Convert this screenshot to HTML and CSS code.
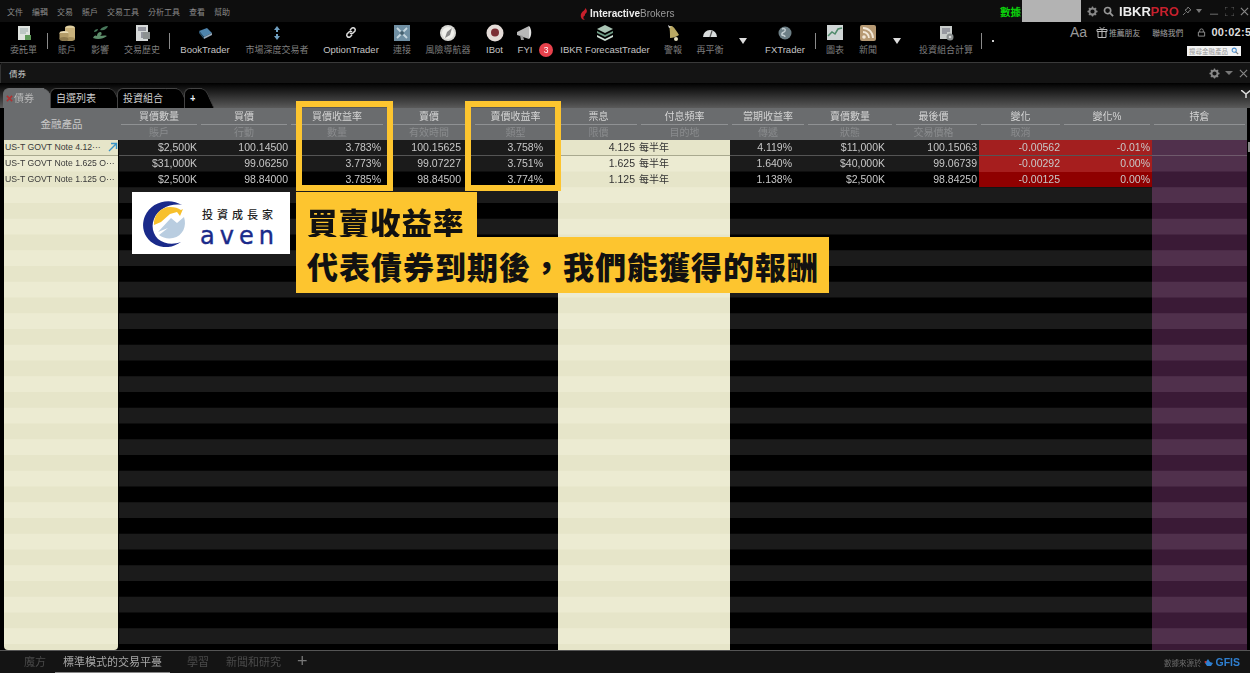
FILE: index.html
```html
<!DOCTYPE html>
<html lang="zh-Hant">
<head>
<meta charset="utf-8">
<title>IBKR 債券</title>
<link rel="stylesheet" href="styles.css">
</head>
<body>
<div class="stage">
<div class="app">
  <header class="titlebar">
    <nav class="menu"><span>文件</span><span>編輯</span><span>交易</span><span>賬戶</span><span>交易工具</span><span>分析工具</span><span>查看</span><span>幫助</span></nav>
    <div class="brand">
      <svg class="flame" viewBox="0 0 8 12"><path d="M5 0C6 2 2 3 1 6c-1 3 1 6 4 6-2-1-2-3-1-4 1 0 1-1 1-2C7 5 8 2 5 0z" fill="#c8202c"/></svg>
      <span class="brand-a">Interactive</span><span class="brand-b">Brokers</span>
    </div>
    <div class="title-right">
      <span class="data-label">數據</span>
      <span class="redact"></span>
      <svg class="ic-gear" viewBox="0 0 12 12"><circle cx="6" cy="6" r="3.4" fill="none" stroke="#888" stroke-width="2.2"/><path d="M6 .5v2M6 9.5v2M.5 6h2M9.5 6h2M2 2l1.4 1.4M8.6 8.6 10 10M10 2 8.6 3.4M3.4 8.6 2 10" stroke="#888" stroke-width="1.4"/></svg>
      <svg class="ic-search" viewBox="0 0 12 12"><circle cx="5" cy="5" r="3.4" fill="none" stroke="#999" stroke-width="1.8"/><path d="M7.5 7.5 11 11" stroke="#999" stroke-width="2"/></svg>
      <span class="ibkr">IBKR<b>PRO</b></span>
      <svg class="ic-pin" viewBox="0 0 10 10"><path d="M6 1l3 3-2 1-1 2-3-3 2-1zM3.5 6.5 1 9" fill="none" stroke="#777" stroke-width="1"/></svg>
      <i class="tri-small"></i>
      <svg class="ic-win" viewBox="0 0 10 10"><path d="M0 8h9" stroke="#666" stroke-width="1.2"/></svg>
      <svg class="ic-win" viewBox="0 0 10 10"><path d="M0 3V0h3M7 0h3v3M10 7v3H7M3 10H0V7" fill="none" stroke="#666" stroke-width="1"/></svg>
      <svg class="ic-win" viewBox="0 0 10 10"><path d="M1 1l8 8M9 1 1 9" stroke="#888" stroke-width="1.3"/></svg>
    </div>
  </header>

  <div class="toolbar">
    <div class="tools">
      <div class="tool"><svg viewBox="0 0 20 20"><rect x="4" y="3" width="12" height="14" fill="#dfe3df"/><path d="M6 6h8M6 8h8M6 10h6" stroke="#9aa" stroke-width="1"/><rect x="11" y="12" width="6" height="5" fill="#5f9a5a"/></svg><span class="cjk">委託單</span></div>
      <i class="sep"></i>
      <div class="tool"><svg viewBox="0 0 20 20"><ellipse cx="13" cy="5" rx="5" ry="2.5" fill="#e0cfa0"/><rect x="8" y="5" width="10" height="11" fill="#c9b27c"/><ellipse cx="13" cy="16" rx="5" ry="2" fill="#a8925f"/><ellipse cx="7" cy="10" rx="4.5" ry="2" fill="#eadcb4"/><rect x="2.5" y="10" width="9" height="6" fill="#b39c68"/><ellipse cx="7" cy="16" rx="4.5" ry="2" fill="#8f7b4e"/></svg><span class="cjk">賬戶</span></div>
      <div class="tool"><svg viewBox="0 0 20 20"><path d="M3 15c5 2 10 1 14-2-3-1-5 0-7 0 2-1 2-3 1-4-3 0-4 2-4 4-1-1-3-1-4 2z" fill="#5d8c6a"/><path d="M10 7c2-3 5-4 8-4-1 3-4 5-8 4zM4 9c0-2 2-3 4-3 0 2-2 3-4 3z" fill="#47775a"/></svg><span class="cjk">影響</span></div>
      <div class="tool"><svg viewBox="0 0 20 20"><rect x="4" y="2" width="12" height="16" fill="#d5d8d8"/><path d="M6 5h8M6 7h8M9 10h7M9 12h7M9 14h7" stroke="#556" stroke-width="1.1"/><rect x="11" y="9" width="7" height="7" fill="#8c9090"/></svg><span class="cjk">交易歷史</span></div>
      <i class="sep"></i>
      <div class="tool"><svg viewBox="0 0 20 20"><path d="M4 8l8-3 5 5-8 4z" fill="#4e84ad"/><path d="M4 8l5 6v2L4 10z" fill="#2d5675"/><path d="M9 14l8-4v2l-8 4z" fill="#9ab"/></svg><span>BookTrader</span></div>
      <div class="tool"><svg viewBox="0 0 20 20"><path d="M10 3l3 4h-2v2H9V7H7zM10 17l3-4h-2v-2H9v2H7z" fill="#6f9fc0"/></svg><span class="cjk">市場深度交易者</span></div>
      <div class="tool"><svg viewBox="0 0 20 20"><path d="M9 7l2-2c2-1 4 1 3 3l-2 2c-1 1-2 1-3 0M11 12l-2 2c-2 1-4-1-3-3l2-2c1-1 2-1 3 0" fill="none" stroke="#ddd" stroke-width="1.5"/></svg><span>OptionTrader</span></div>
      <div class="tool"><svg viewBox="0 0 20 20"><rect x="2" y="2" width="16" height="16" fill="#6f8fa3"/><path d="M5 5l10 10M15 5 5 15" stroke="#c5d6df" stroke-width="1.8"/><circle cx="10" cy="10" r="2" fill="#44606f"/></svg><span class="cjk">連接</span></div>
      <div class="tool"><svg viewBox="0 0 20 20"><circle cx="10" cy="10" r="8" fill="#d8d8d4"/><circle cx="10" cy="10" r="6" fill="#f0f0ec"/><path d="M14 5l-2 7-5 3 2-6z" fill="#888"/></svg><span class="cjk">風險導航器</span></div>
      <div class="tool"><svg viewBox="0 0 20 20"><circle cx="10" cy="10" r="8.5" fill="#e5dcd8"/><circle cx="10" cy="9.5" r="4" fill="#7c2f35"/></svg><span>IBot</span></div>
      <div class="tool"><svg viewBox="0 0 20 20"><path d="M2 9l12-6v13L2 12z" fill="#b8b8b8"/><path d="M14 3c3 3 3 10 0 13z" fill="#e2e2e2"/><path d="M5 12l1 5h3l-1-4z" fill="#999"/></svg><span>FYI</span></div>
      <div class="badge-slot"><span class="badge">3</span></div>
      <div class="tool"><svg viewBox="0 0 20 20"><path d="M10 2l8 4-8 4-8-4z" fill="#a9c4b4"/><path d="M2 8l8 4 8-4v2l-8 4-8-4z" fill="#6f9c86"/><path d="M2 12l8 4 8-4v2l-8 4-8-4z" fill="#cfe0d6"/></svg><span>IBKR ForecastTrader</span></div>
      <div class="tool"><svg viewBox="0 0 20 20"><path d="M6 3l3 0c3 2 5 6 7 9-3 2-6 3-9 3C7 11 7 6 6 3z" fill="#b9a862"/><path d="M5 2l3 2-2 1z" fill="#ddd"/><circle cx="13" cy="16" r="2" fill="#e4dfbf"/></svg><span class="cjk">警報</span></div>
      <div class="tool"><svg viewBox="0 0 20 20"><path d="M3 14a7 7 0 0 1 14 0z" fill="#d9dcdc"/><path d="M10 14l2-6" stroke="#555" stroke-width="1.2"/></svg><span class="cjk">再平衡</span></div>
      <div class="caret-cell"><i class="tri"></i></div>
      <div class="tool"><svg viewBox="0 0 20 20"><circle cx="10" cy="10" r="6.5" fill="#6d7f86"/><path d="M7 6c2-1 4 0 3 2S6 9 7 12c2 1 3 0 3 2" stroke="#c5d0d4" stroke-width="1.4" fill="none"/></svg><span>FXTrader</span></div>
      <i class="sep"></i>
      <div class="tool"><svg viewBox="0 0 20 20"><rect x="2" y="2" width="16" height="15" fill="#cfd5d5"/><path d="M3 13l4-4 3 2 3-5 4-1" fill="none" stroke="#4f8a6a" stroke-width="1.5"/></svg><span class="cjk">圖表</span></div>
      <div class="tool"><svg viewBox="0 0 20 20"><rect x="2" y="2" width="16" height="16" rx="2" fill="#b79a74"/><circle cx="6" cy="14" r="1.8" fill="#f2e8d8"/><path d="M5 9a6 6 0 0 1 6 6M5 5a10 10 0 0 1 10 10" fill="none" stroke="#f2e8d8" stroke-width="1.8"/></svg><span class="cjk">新聞</span></div>
      <div class="caret-cell"><i class="tri"></i></div>
      <div class="tool"><svg viewBox="0 0 20 20"><rect x="4" y="3" width="12" height="13" fill="#c8ccca"/><path d="M6 6h8M6 8h8M6 10h5" stroke="#667" stroke-width="1"/><circle cx="14" cy="14" r="3.5" fill="#8a8f8f"/><circle cx="14" cy="14" r="1.3" fill="#ddd"/></svg><span class="cjk">投資組合計算</span></div>
      <i class="sep"></i>
      <div class="dot-cell"><i class="dot"></i></div>
    </div>
    <div class="tool-right">
      <div class="tool-links">
        <span class="aa">Aa</span>
        <svg class="ic-gift" viewBox="0 0 12 12"><path d="M1 3.5h10v2H1zM2 5.5v6h8v-6M6 3.5v8M3.5 1 6 3.5 8.5 1" fill="none" stroke="#bbb" stroke-width="1"/></svg>
        <span class="link first">推薦朋友</span>
        <span class="link second">聯絡我們</span>
        <svg class="ic-lock" viewBox="0 0 10 10"><path d="M3 4.5V3a2 2 0 0 1 4 0v1.5M1.5 4.5h7V9h-7z" fill="none" stroke="#999" stroke-width="1"/></svg>
        <span class="clock">00:02:50</span>
      </div>
      <div class="searchbox"><span>搜尋金融產品</span><svg viewBox="0 0 10 10"><circle cx="4" cy="4" r="2.6" fill="none" stroke="#4a8fd0" stroke-width="1.3"/><path d="M6 6l3 3" stroke="#777" stroke-width="1.5"/></svg></div>
    </div>
  </div>

  <div class="panelbar">
    <span class="panel-title">債券</span>
    <div class="panel-actions">
      <svg class="ic-gear" viewBox="0 0 12 12"><circle cx="6" cy="6" r="3.4" fill="none" stroke="#888" stroke-width="2.2"/><path d="M6 .5v2M6 9.5v2M.5 6h2M9.5 6h2M2 2l1.4 1.4M8.6 8.6 10 10M10 2 8.6 3.4M3.4 8.6 2 10" stroke="#888" stroke-width="1.4"/></svg>
      <i class="tri-small"></i>
      <svg class="ic-win" viewBox="0 0 10 10"><path d="M1 1l8 8M9 1 1 9" stroke="#888" stroke-width="1.3"/></svg>
    </div>
  </div>

  <div class="tabstrip">
    <div class="tab active"><svg class="tab-x" viewBox="0 0 8 8"><path d="M1 1l6 6M7 1 1 7" stroke="#b03030" stroke-width="1.8"/></svg>債券</div>
    <div class="tab">自選列表</div>
    <div class="tab">投資組合</div>
    <div class="tab plus">+</div>
    <svg class="filter" viewBox="0 0 10 8"><path d="M0 0l5 4 5-4M5 4v4" fill="none" stroke="#ddd" stroke-width="1.5"/></svg>
  </div>

  <div class="table">
    <div class="col instrument">
      <div class="hd hd-merged">金融產品</div>
      <div class="cells cream">
        <div class="cell first inst"><span>US-T GOVT Note 4.12···</span><svg class="arrow" viewBox="0 0 10 10"><path d="M1 9l7-7M3 1.5h5.5V7" fill="none" stroke="#3a95c8" stroke-width="1.4"/></svg></div>
        <div class="cell inst"><span>US-T GOVT Note 1.625 O···</span></div>
        <div class="cell inst"><span>US-T GOVT Note 1.125 O···</span></div>
      </div>
    </div>
    <div class="col">
      <div class="hd"><span class="h1">買價數量</span><span class="h2">賬戶</span></div>
      <div class="cells dark pr2"><div class="cell first">$2,500K</div><div class="cell">$31,000K</div><div class="cell">$2,500K</div></div>
    </div>
    <div class="col">
      <div class="hd"><span class="h1">買價</span><span class="h2">行動</span></div>
      <div class="cells dark pr1"><div class="cell first">100.14500</div><div class="cell">99.06250</div><div class="cell">98.84000</div></div>
    </div>
    <div class="col">
      <div class="hd"><span class="h1">買價收益率</span><span class="h2">數量</span></div>
      <div class="cells dark pr4"><div class="cell first">3.783%</div><div class="cell">3.773%</div><div class="cell">3.785%</div></div>
    </div>
    <div class="col">
      <div class="hd"><span class="h1">賣價</span><span class="h2">有效時間</span></div>
      <div class="cells dark pr12"><div class="cell first">100.15625</div><div class="cell">99.07227</div><div class="cell">98.84500</div></div>
    </div>
    <div class="col">
      <div class="hd"><span class="h1">賣價收益率</span><span class="h2">類型</span></div>
      <div class="cells dark pr15"><div class="cell first">3.758%</div><div class="cell">3.751%</div><div class="cell">3.774%</div></div>
    </div>
    <div class="col">
      <div class="hd"><span class="h1">票息</span><span class="h2">限價</span></div>
      <div class="cells cream pr4"><div class="cell first">4.125</div><div class="cell">1.625</div><div class="cell">1.125</div></div>
    </div>
    <div class="col">
      <div class="hd"><span class="h1">付息頻率</span><span class="h2">目的地</span></div>
      <div class="cells cream left"><div class="cell first">每半年</div><div class="cell">每半年</div><div class="cell">每半年</div></div>
    </div>
    <div class="col">
      <div class="hd"><span class="h1">當期收益率</span><span class="h2">傳遞</span></div>
      <div class="cells dark pr14"><div class="cell first">4.119%</div><div class="cell">1.640%</div><div class="cell">1.138%</div></div>
    </div>
    <div class="col">
      <div class="hd"><span class="h1">賣價數量</span><span class="h2">狀態</span></div>
      <div class="cells dark pr9"><div class="cell first">$11,000K</div><div class="cell">$40,000K</div><div class="cell">$2,500K</div></div>
    </div>
    <div class="col">
      <div class="hd"><span class="h1 shift">最後價</span><span class="h2 shift">交易價格</span></div>
      <div class="cells dark pr2"><div class="cell first">100.15063</div><div class="cell">99.06739</div><div class="cell">98.84250</div></div>
    </div>
    <div class="col">
      <div class="hd"><span class="h1">變化</span><span class="h2">取消</span></div>
      <div class="cells dark pr2"><div class="cell first red1">-0.00562</div><div class="cell red2">-0.00292</div><div class="cell red3">-0.00125</div></div>
    </div>
    <div class="col">
      <div class="hd"><span class="h1">變化%</span><span class="h2">&nbsp;</span></div>
      <div class="cells dark pr2"><div class="cell first red1">-0.01%</div><div class="cell red2">0.00%</div><div class="cell red3">0.00%</div></div>
    </div>
    <div class="col">
      <div class="hd"><span class="h1">持倉</span><span class="h2">&nbsp;</span></div>
      <div class="cells plum"><div class="cell first"></div><div class="cell"></div><div class="cell"></div></div>
    </div>
  </div>

  <footer class="footer">
    <div class="pages"><span class="page">魔方</span><span class="page current">標準模式的交易平臺</span><span class="page">學習</span><span class="page">新聞和研究</span><span class="page add">+</span></div>
    <div class="source"><span>數據來源於</span><svg viewBox="0 0 10 10"><path d="M1 6l3-4 2 3 3 1-2 3H3z" fill="#2f7fd0"/><circle cx="1.5" cy="5" r="1" fill="#c33"/></svg><b>GFIS</b></div>
  </footer>
</div>

<div class="scrollmark"></div>
<div class="hl hl-bid"></div>
<div class="hl hl-ask"></div>
<div class="callout-a">買賣收益率</div>
<div class="callout-b">代表債券到期後，我們能獲得的報酬</div>
<div class="logo">
  <svg viewBox="0 0 48 48"><path d="M39 6C26-2 8 3 2 17c-5 12 0 24 11 29 9 4 18 2 25-3-8 3-17 2-23-3-5-5-7-13-4-20C15 10 27 4 39 6z" fill="#1a2a8a"/><path d="M11 26C10 16 18 8 27 8c5 0 8 1 11 3l2-1-3 7-3-4-7 2-9 8z" fill="#f7c02c"/><path d="M15 33l13-14 6 5 7-6c3 9-1 19-11 21-5 1-10 0-14-3l9-7z" fill="#b9cde0"/></svg>
  <div class="logo-text"><span class="logo-zh">投資成長家</span><span class="logo-en">aven</span></div>
</div>
</div>
</body>
</html>
```

FILE: styles.css
```css
* { box-sizing: border-box; }
html, body { margin: 0; padding: 0; background: #000; }
body { font-family: "Liberation Sans", "Noto Sans CJK TC", sans-serif; }
svg { display: block; }
i { display: block; }

.stage { position: relative; width: 1250px; height: 673px; overflow: hidden; }
.app { width: 1250px; height: 673px; display: flex; flex-direction: column; filter: blur(.35px); }

/* title bar */
.titlebar { height: 22px; flex: none; background: #0e0e0e; display: flex; align-items: center; position: relative; }
.menu { display: flex; gap: 9px; padding-left: 7px; font-size: 8px; color: #8a8a8a; }
.brand { position: absolute; left: 580px; top: 8px; display: flex; align-items: center; font-size: 10px; line-height: 12px; }
.flame { width: 8px; height: 12px; margin-right: 2px; }
.brand-a { color: #eee; font-weight: 700; }
.brand-b { color: #9a9a9a; }
.title-right { margin-left: auto; display: flex; align-items: center; height: 22px; }
.title-right > * { flex: none; }
.data-label { color: #0bd40b; font-size: 10.5px; font-weight: 700; margin-right: 1px; }
.redact { width: 59px; height: 22px; background: #b3b3b3; margin-right: 6px; }
.ic-gear { width: 11px; height: 11px; }
.title-right .ic-gear { margin-right: 5px; }
.ic-search { width: 11px; height: 11px; margin-right: 5px; }
.ibkr { font-size: 13px; font-weight: 700; color: #eee; margin-right: 3px; }
.ibkr b { color: #c8202c; }
.ic-pin { width: 10px; height: 10px; margin-right: 4px; }
.tri-small { width: 0; height: 0; border-left: 3.5px solid transparent; border-right: 3.5px solid transparent; border-top: 4px solid #777; margin-right: 8px; }
.ic-win { width: 9px; height: 9px; margin-right: 6px; }
.title-right .ic-win:last-child { margin-right: 1px; }

/* toolbar */
.toolbar { height: 41px; flex: none; background: #000; display: flex; justify-content: space-between; border-bottom: 1px solid #3a3a3a; }
.tools { display: grid; grid-template-columns: 47px 2px 36px 30px 54px 2px 68px 76px 72px 30px 62px 31px 30px 13px 104px 32px 42px 24px 60px 2px 36px 30px 28px 70px 3px 18px; padding-top: 1px; }
.tool { display: flex; flex-direction: column; align-items: center; font-size: 9.5px; color: #c4c4c4; white-space: nowrap; }
.tool svg { width: 20px; height: 20px; margin-bottom: 1px; }
.tool span { line-height: 12px; }
.tool .cjk { font-size: 9px; color: #7e7e7e; }
.sep { width: 1px; height: 16px; margin-top: 10px; background: #8a8a8a; }
.badge-slot { position: relative; }
.badge { position: absolute; left: -1px; top: 20px; width: 14px; height: 14px; border-radius: 50%; background: #e8414c; color: #fff; font-size: 8.5px; line-height: 14px; text-align: center; }
.caret-cell { display: flex; justify-content: center; padding-top: 15px; }
.tri { width: 0; height: 0; border-left: 4.5px solid transparent; border-right: 4.5px solid transparent; border-top: 6px solid #ddd; }
.dot-cell { display: flex; justify-content: center; padding-top: 17px; }
.dot { width: 2px; height: 2px; background: #ccc; }

.tool-right { width: 186px; display: flex; flex-direction: column; align-items: flex-start; }
.tool-links { display: flex; align-items: center; height: 18px; margin-top: 1px; padding-left: 6px; white-space: nowrap; width: 186px; overflow: hidden; }
.tool-links > * { flex: none; }
.aa { font-size: 14px; color: #999; width: 26px; }
.ic-gift { width: 12px; height: 12px; margin-right: 1px; }
.link { font-size: 7.8px; color: #a0a0a0; }
.link.first { margin-right: 12px; }
.link.second { margin-right: 14px; }
.ic-lock { width: 9px; height: 9px; margin-right: 5px; }
.clock { font-size: 11px; font-weight: 700; color: #ddd; letter-spacing: .3px; }
.searchbox { width: 54px; height: 10px; background: #f2f2f2; margin: 5px 0 0 123px; display: flex; align-items: center; justify-content: space-between; padding: 0 2px; font-size: 6.5px; color: #999; overflow: hidden; white-space: nowrap; }
.searchbox svg { width: 8px; height: 8px; }

/* panel bar */
.panelbar { height: 20px; flex: none; background: #141414; border-left: 1px solid #333; border-radius: 3px 0 0 0; display: flex; align-items: center; justify-content: space-between; padding-left: 8px; }
.panel-title { font-size: 8.5px; color: #c4c4c4; }
.panel-actions { display: flex; align-items: center; }
.panel-actions .ic-gear { margin-right: 5px; }
.panel-actions .tri-small { margin-right: 6px; border-left-width: 4px; border-right-width: 4px; }
.panel-actions .ic-win { margin-right: 2px; }

/* tab strip */
.tabstrip { height: 25px; flex: none; background: linear-gradient(#000, #5a5a5a); display: flex; align-items: flex-end; padding-left: 3px; position: relative; }
.tab { position: relative; height: 20px; width: 60px; margin-right: 7px; background: #000; color: #d0d0d0; font-size: 10px; line-height: 19px; padding-left: 5px; border: 1px solid #444; border-bottom: 0; border-right: 0; border-radius: 6px 0 0 0; white-space: nowrap; }
.tab::after { content: ""; position: absolute; right: -8px; top: -1px; bottom: 0; width: 14px; background: inherit; border-top: 1px solid #444; border-right: 1px solid #444; border-radius: 0 6px 0 0; transform: skewX(24deg); }
.tab.active { width: 41px; margin-right: 6px; background: #6a6c6e; border-color: #6a6c6e; color: #b9b9b9; padding-left: 2px; }
.tab.active::after { border-color: #6a6c6e; }
.tab.plus { width: 18px; margin-right: 0; font-weight: 700; color: #eee; }
.tab-x { display: inline-block; width: 7px; height: 7px; margin-right: 1px; }
.filter { position: absolute; right: -1px; top: 7px; width: 10px; height: 8px; }

/* table */
.table { height: 542px; flex: none; display: grid; grid-template-columns: 115px 80px 90px 96px 88px 85px 81px 91px 76px 88px 85px 83px 90px 95px; padding-left: 4px; background: #000; }
.col { display: flex; flex-direction: column; min-width: 0; }
.hd { height: 32px; flex: none; background: #6a6c6e; display: flex; flex-direction: column; font-size: 10px; text-align: center; }
.hd-merged { line-height: 33px; color: #c8c8c8; font-size: 10.5px; }
.h1 { height: 17px; line-height: 17px; color: #d4d4d4; border-bottom: 1px solid #8f9193; margin: 0 2px; }
.h2 { height: 15px; line-height: 15px; color: #8a8c8e; }
.shift { padding-right: 6px; }
.cells { flex: 1; font-size: 10.5px; text-align: right; color: #c8c8c8; background-size: 100% 31.5px; }
.cell { height: 15.75px; line-height: 15px; white-space: nowrap; }
.dark { background-image: linear-gradient(#000 50%, #1b1b1b 50%); }
.dark .first { background: #1b1b1b; border-bottom: 1px solid #555; }
.cream { background-image: linear-gradient(#e6e5c9 50%, #ecebd2 50%); color: #333; }
.cream .first { border-bottom: 1px solid #a9a98f; }
.plum { background-image: linear-gradient(#3a1a36 50%, #50304c 50%); }
.plum .first { background: #50304c; border-bottom: 1px solid #6f5a6c; }
.instrument .cells { margin-right: 1px; border-radius: 0 0 4px 4px; }
.inst { display: flex; justify-content: space-between; align-items: center; font-size: 8.7px; padding-left: 1px; text-align: left; color: #3a3a3a; }
.arrow { width: 10px; height: 10px; }
.left { text-align: left; font-size: 10px; }
.pr1 .cell { padding-right: 1px; }
.pr2 .cell { padding-right: 2px; }
.pr4 .cell { padding-right: 4px; }
.pr9 .cell { padding-right: 9px; }
.pr12 .cell { padding-right: 12px; }
.pr14 .cell { padding-right: 14px; }
.pr15 .cell { padding-right: 15px; }
.dark .red1 { background: #a31f1f; }
.dark .red2 { background: #a61e1e; }
.dark .red3 { background: #8f0000; }

/* footer */
.footer { height: 23px; flex: 1; background: #141414; border-top: 1px solid #555; display: flex; justify-content: space-between; align-items: center; }
.pages { display: flex; align-items: center; height: 22px; padding-left: 16px; font-size: 11px; color: #4a4a4a; }
.page { padding: 0 8px; height: 22px; line-height: 22px; margin-right: 1px; }
.page.current { color: #a8a8a8; border-bottom: 1px solid #888; margin-right: 9px; }
.page.add { font-size: 18px; color: #777; padding: 0 0 0 7px; line-height: 20px; }
.source { display: flex; align-items: center; font-size: 7.5px; color: #6c6c6c; padding-right: 10px; }
.source svg { width: 10px; height: 10px; margin: 0 1px 0 3px; }
.source b { color: #2f7fd0; font-size: 10.5px; }

/* overlays */
.scrollmark { position: absolute; right: 0; top: 142px; width: 2px; height: 10px; background: #888; }
.hl { position: absolute; top: 101px; height: 90px; border: 6px solid #fdc52f; }
.hl-bid { left: 296px; width: 97px; }
.hl-ask { left: 465px; width: 96px; }
.callout-a, .callout-b { position: absolute; background: #fdc52f; color: #111; font-family: "Noto Sans CJK TC", sans-serif; font-weight: 900; white-space: nowrap; letter-spacing: 1px; }
.callout-a { left: 296px; top: 192px; width: 181px; height: 46px; font-size: 30.5px; line-height: 60px; padding-left: 11px; }
.callout-b { left: 296px; top: 237px; width: 533px; height: 56px; font-size: 31px; line-height: 58px; padding-left: 11px; }
.logo { position: absolute; left: 132px; top: 192px; width: 158px; height: 62px; background: #fff; display: flex; align-items: center; padding-left: 11px; }
.logo svg { width: 48px; height: 48px; flex: none; }
.logo-text { display: flex; flex-direction: column; align-items: flex-start; margin-left: 9px; padding-top: 7px; color: #1a2a8a; }
.logo-zh { font-family: "Noto Sans CJK TC", sans-serif; font-size: 11px; font-weight: 500; color: #222; letter-spacing: 4px; line-height: 16px; padding-left: 2px; }
.logo-en { font-family: "DejaVu Sans", sans-serif; font-size: 24px; line-height: 22px; margin-top: 3px; letter-spacing: 5px; -webkit-text-stroke: .4px #1a2a8a; }
```
